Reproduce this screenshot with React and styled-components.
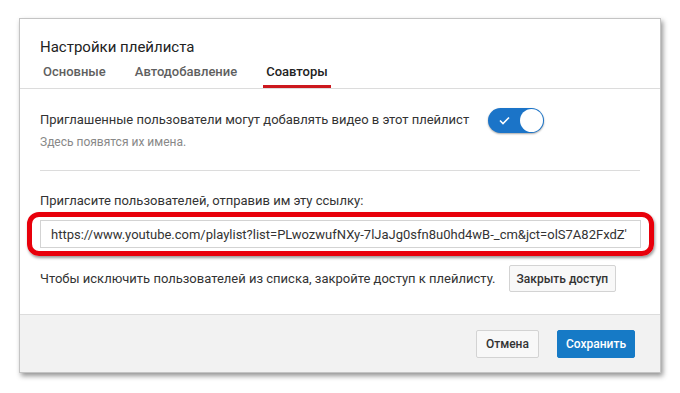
import React from "react";
import styled, { createGlobalStyle } from "styled-components";

const GlobalStyle = createGlobalStyle`
  html, body {
    margin: 0;
    padding: 0;
    background: #fff;
    font-family: Roboto, "Noto Sans", Arial, sans-serif;
  }
`;

const Page = styled.div`
  width: 680px;
  height: 393px;
  padding: 19px 0 0 20px;
  box-sizing: border-box;
`;

const Dialog = styled.div`
  width: 640px;
  height: 353px;
  background: #fff;
  display: flex;
  flex-direction: column;
  box-shadow: 0 0 0 1px #c4c4c4, 2px 3px 5px 1px rgba(0, 0, 0, 0.42);
`;

const Header = styled.div`
  padding: 18px 20px 0;
  border-bottom: 1px solid #dcdcdc;
`;

const Title = styled.div`
  font-size: 15px;
  line-height: 20px;
  color: #222;
`;

const Tabs = styled.div`
  display: flex;
  gap: 23px;
`;

const Tab = styled.div`
  padding: 7px 3px 5px;
  font-size: 13px;
  line-height: 16px;
  font-weight: 500;
  color: ${(p) => (p.$active ? "#222" : "#5f5f5f")};
  border-bottom: 3px solid ${(p) => (p.$active ? "#cc181e" : "transparent")};
`;

const Body = styled.div`
  flex: 1;
  padding: 22px 20px 0;
`;

const ToggleRow = styled.div`
  display: flex;
  align-items: flex-start;
  gap: 19px;
`;

const Text = styled.div`
  font-size: 13px;
  line-height: 18px;
  color: #333;
`;

const Hint = styled.div`
  margin-top: 5px;
  font-size: 12px;
  line-height: 16px;
  color: #888;
`;

const Switch = styled.div`
  margin-top: -3px;
  width: 56px;
  height: 25px;
  border-radius: 13px;
  background: #1b74c8;
  display: flex;
  align-items: center;
  justify-content: space-between;
  padding: 0 1px 0 11px;
  box-sizing: border-box;
  box-shadow: 0 1px 2px rgba(0, 0, 0, 0.35);
`;

const Knob = styled.div`
  width: 23px;
  height: 23px;
  border-radius: 50%;
  background: #fff;
`;

const Divider = styled.div`
  margin: 20px 0 21px;
  height: 1px;
  background: #dcdcdc;
`;

const Highlight = styled.div`
  margin: 2px -14px 0 -13px;
  padding: 3px 8px;
  border: 5px solid #e8000b;
  border-radius: 12px;
  box-shadow: 1px 2px 3px rgba(0, 0, 0, 0.4);
`;

const LinkField = styled.input`
  display: block;
  width: 100%;
  height: 28px;
  box-sizing: border-box;
  border: 1px solid #d3d3d3;
  padding: 0 10px;
  font-family: Roboto, Arial, sans-serif;
  font-size: 13px;
  color: #333;
  background: #fff;
  outline: none;
`;

const RevokeRow = styled.div`
  margin-top: 9px;
  display: flex;
  align-items: center;
  gap: 13px;
`;

const Button = styled.button`
  height: ${(p) => p.$h || 28}px;
  padding: 0 ${(p) => p.$px || 10}px;
  border-radius: 2px;
  font-family: Roboto, Arial, sans-serif;
  font-size: 12px;
  font-weight: 500;
  cursor: pointer;
  border: 1px solid ${(p) => (p.$primary ? "#167ac6" : "#d3d3d3")};
  background: ${(p) => (p.$primary ? "#167ac6" : "#f8f8f8")};
  color: ${(p) => (p.$primary ? "#fff" : "#333")};
`;

const Footer = styled.div`
  border-top: 1px solid #dcdcdc;
  background: #f2f2f2;
  padding: 15px 25px 14px;
  display: flex;
  justify-content: flex-end;
  gap: 18px;
`;

export default function App() {
  return (
    <Page>
      <GlobalStyle />
      <Dialog>
        <Header>
          <Title>Настройки плейлиста</Title>
          <Tabs>
            <Tab>Основные</Tab>
            <Tab>Автодобавление</Tab>
            <Tab $active>Соавторы</Tab>
          </Tabs>
        </Header>
        <Body>
          <ToggleRow>
            <div>
              <Text>Приглашенные пользователи могут добавлять видео в этот плейлист</Text>
              <Hint>Здесь появятся их имена.</Hint>
            </div>
            <Switch>
              <svg width="11" height="9" viewBox="0 0 11 9">
                <path d="M1 4.5 L4 7.5 L10 1.5" fill="none" stroke="#fff" strokeWidth="1.6" />
              </svg>
              <Knob />
            </Switch>
          </ToggleRow>
          <Divider />
          <Text>Пригласите пользователей, отправив им эту ссылку:</Text>
          <Highlight>
            <LinkField
              readOnly
              value="https://www.youtube.com/playlist?list=PLwozwufNXy-7lJaJg0sfn8u0hd4wB-_cm&jct=olS7A82FxdZ'"
            />
          </Highlight>
          <RevokeRow>
            <Text>Чтобы исключить пользователей из списка, закройте доступ к плейлисту.</Text>
            <Button $h={27} $px={7}>Закрыть доступ</Button>
          </RevokeRow>
        </Body>
        <Footer>
          <Button $px={9}>Отмена</Button>
          <Button $primary $px={8}>Сохранить</Button>
        </Footer>
      </Dialog>
    </Page>
  );
}
